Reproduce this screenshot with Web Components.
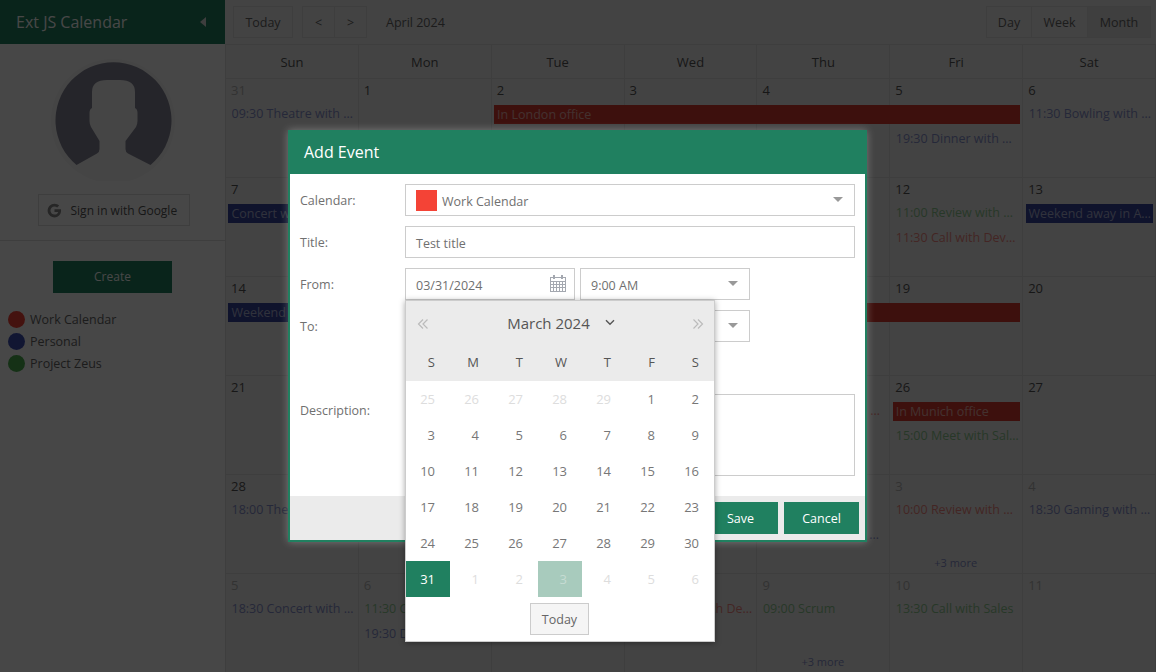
<!DOCTYPE html>
<html>
<head>
<meta charset="utf-8">
<title>Ext JS Calendar</title>
<style>
    html, body { margin: 0; height: 100%; overflow: hidden; }
    body { font: 12.5px "Open Sans", "Liberation Sans", sans-serif; color: #666; background: #fff; }
    cal-app { width: 1156px; height: 672px; }
</style>
</head>
<body>
<cal-app></cal-app>

<script>
const CAL_COLORS = { red: '#f44336', blue: '#3f51b5', green: '#4caf50' };
const BAR_COLORS = { red: '#dc3c30', blue: '#36449e', green: '#4caf50' };

// one week per row: number, outside-month flag, then events by column
const WEEKS = [
    { days: [[31, 1], [1], [2], [3], [4], [5], [6]], events: [
        { col: 0, lane: 0, color: 'blue', text: '09:30 Theatre with friends' },
        { col: 2, span: 4, lane: 0, color: 'red', text: 'In London office', bar: 1 },
        { col: 5, lane: 1, color: 'blue', text: '19:30 Dinner with Wendy' },
        { col: 6, lane: 0, color: 'blue', text: '11:30 Bowling with friends' }
    ] },
    { days: [[7], [8], [9], [10], [11], [12], [13]], events: [
        { col: 0, span: 2, lane: 0, color: 'blue', text: 'Concert with friends', bar: 1 },
        { col: 5, lane: 0, color: 'green', text: '11:00 Review with Sales' },
        { col: 5, lane: 1, color: 'red', text: '11:30 Call with Development' },
        { col: 6, lane: 0, color: 'blue', text: 'Weekend away in Amsterdam', bar: 1 }
    ] },
    { days: [[14], [15], [16], [17], [18], [19], [20]], events: [
        { col: 0, span: 2, lane: 0, color: 'blue', text: 'Weekend away', bar: 1 },
        { col: 3, span: 3, lane: 0, color: 'red', text: 'In Paris office', bar: 1 }
    ] },
    { days: [[21], [22], [23], [24], [25], [26], [27]], events: [
        { col: 4, lane: 0, color: 'red', text: '10:00 Review with Marketing' },
        { col: 5, lane: 0, color: 'red', text: 'In Munich office', bar: 1 },
        { col: 5, lane: 1, color: 'green', text: '15:00 Meet with Sales team' }
    ] },
    { days: [[28], [29], [30], [1, 1], [2, 1], [3, 1], [4, 1]], more: [5], events: [
        { col: 0, lane: 0, color: 'blue', text: '18:00 Theatre with friends' },
        { col: 4, lane: 1, color: 'blue', text: '19:30 Dinner with Wendy' },
        { col: 5, lane: 0, color: 'red', text: '10:00 Review with Marketing' },
        { col: 6, lane: 0, color: 'blue', text: '18:30 Gaming with friends' }
    ] },
    { days: [[5, 1], [6, 1], [7, 1], [8, 1], [9, 1], [10, 1], [11, 1]], more: [4], events: [
        { col: 0, lane: 0, color: 'blue', text: '18:30 Concert with friends' },
        { col: 1, lane: 0, color: 'green', text: '11:30 Call with Sales' },
        { col: 1, lane: 1, color: 'blue', text: '19:30 Dinner with Wendy' },
        { col: 3, lane: 0, color: 'red', text: '14:00 Meet with Development' },
        { col: 4, lane: 0, color: 'green', text: '09:00 Scrum' },
        { col: 5, lane: 0, color: 'green', text: '13:30 Call with Sales' }
    ] }
];

class CalButton extends HTMLElement {
    constructor() {
        super();
        this.attachShadow({ mode: 'open' }).innerHTML = `
            <style>
                :host {
                    display: flex; align-items: center; justify-content: center;
                    box-sizing: border-box; height: 32px; padding: 0 12px;
                    border: 1px solid #ccc; background: #f5f5f5; color: #666;
                    font-size: 12.5px; cursor: pointer;
                }
                :host([primary]) { background: #208060; border-color: #208060; color: #fff; }
            </style>
            <slot></slot>`;
    }
}

class AppSidebar extends HTMLElement {
    constructor() {
        super();
        this.attachShadow({ mode: 'open' }).innerHTML = `
            <style>
                :host { display: flex; flex-direction: column; width: 225px; flex: none; background: #fff; }
                header {
                    display: flex; align-items: center; justify-content: space-between;
                    height: 44px; padding: 0 19px 0 16px; box-sizing: border-box;
                    background: #208060; color: #fff; font-size: 16px;
                }
                .tri { width: 0; height: 0; border: 5px solid transparent; border-right: 6px solid #ddd; border-left: 0; }
                .profile { display: flex; flex-direction: column; align-items: center; height: 196px; border-bottom: 1px solid #ddd; }
                .avatar { display: block; margin-top: 15px; }
                .google {
                    display: flex; align-items: center; gap: 9px; box-sizing: border-box;
                    width: 152px; height: 32px; margin: 13px 0 0 2px; padding-left: 8px;
                    border: 1px solid #ddd; font-size: 12px; color: #555;
                }
                .create { align-self: center; width: 119px; height: 32px; margin: 20px 0 15px; padding-bottom: 2px; font-size: 12px; }
                .legend { display: flex; flex-direction: column; padding-left: 8px; }
                .legend div { display: flex; align-items: center; gap: 5px; height: 22px; color: #666; }
                .legend i { width: 17px; height: 17px; border-radius: 50%; }
            </style>
            <header><span>Ext JS Calendar</span><span class="tri"></span></header>
            <div class="profile">
                <svg class="avatar" width="124" height="122" viewBox="0 0 124 122">
                    <circle cx="62" cy="62" r="62" fill="#f6f6f6"/>
                    <path fill="#858596" d="M25.500 106 A58 58 0 1 1 99.500 106 L77 94.500 Q74.500 93 74.500 90 L74.500 82 L85 68 Q86.500 65 86.500 62 L86.500 54 Q86.500 50 84 49 L84 33 Q84 21 69 21 L56 21 Q41 21 41 33 L41 49 Q38.500 50 38.500 54 L38.500 62 Q38.500 65 40 68 L48.500 82 L48.500 90 Q48.500 93 46 94.500 Z"/>
                </svg>
                <div class="google">
                    <svg width="15" height="15" viewBox="0 0 48 48"><path fill="#888" d="M24 20v8.500h11.800C34.500 33.700 30 37 24 37c-7.200 0-13-5.800-13-13s5.800-13 13-13c3.300 0 6.200 1.200 8.500 3.200l6.300-6.300C34.900 4.400 29.800 2 24 2 11.800 2 2 11.800 2 24s9.800 22 22 22c11 0 21-8 21-22 0-1.300-.1-2.700-.4-4z"/></svg>
                    <span>Sign in with Google</span>
                </div>
            </div>
            <cal-button class="create" primary>Create</cal-button>
            <div class="legend">
                <div><i style="background:${CAL_COLORS.red}"></i>Work Calendar</div>
                <div><i style="background:${CAL_COLORS.blue}"></i>Personal</div>
                <div><i style="background:${CAL_COLORS.green}"></i>Project Zeus</div>
            </div>`;
    }
}

class CalToolbar extends HTMLElement {
    constructor() {
        super();
        this.attachShadow({ mode: 'open' }).innerHTML = `
            <style>
                :host { display: flex; align-items: center; height: 44px; padding: 0 5px 0 8px; box-sizing: border-box; }
                cal-button { background: transparent; border-color: #ddd; }
                .today { width: 60px; margin-right: 9px; }
                .group { display: flex; }
                .group cal-button + cal-button { margin-left: -1px; }
                .nav { width: 33px; padding: 0; }
                .range { margin-left: 19px; flex: 1; color: #666; }
                .day { width: 46px; padding: 0; }
                .week { width: 57px; padding: 0; }
                .month { width: 64px; padding: 0; background: #e0e0e0; }
            </style>
            <cal-button class="today">Today</cal-button>
            <div class="group">
                <cal-button class="nav">&lt;</cal-button>
                <cal-button class="nav">&gt;</cal-button>
            </div>
            <span class="range">April 2024</span>
            <div class="group">
                <cal-button class="day">Day</cal-button>
                <cal-button class="week">Week</cal-button>
                <cal-button class="month">Month</cal-button>
            </div>`;
    }
}

class CalWeek extends HTMLElement {
    constructor() {
        super();
        this.attachShadow({ mode: 'open' });
    }

    set week(w) {
        let html = `
            <style>
                :host {
                    display: grid; height: 99px; box-sizing: border-box;
                    grid-template-columns: repeat(7, minmax(0, 1fr));
                    grid-template-rows: 26px 25px 25px 22px;
                    border-top: 1px solid #ddd; border-right: 1px solid #ddd;
                }
                .day {
                    grid-row: 1 / -1; border-left: 1px solid #ddd;
                    padding: 1px 0 0 5px; line-height: 20px; font-size: 13px; color: #555;
                }
                .day.out { color: #b5b5b5; }
                .ev {
                    grid-row-start: var(--lane); grid-column: var(--col) / span var(--span);
                    min-width: 0; white-space: nowrap; overflow: hidden; text-overflow: ellipsis;
                    line-height: 17px; height: 18px; margin: 0 3px 0 6.5px; color: var(--c); opacity: .6;
                }
                .ev.bar {
                    margin: 0 2.500px 0 3.400px; height: 19px; line-height: 20px; padding: 0 0 0 3px;
                    background: var(--b); color: rgba(255,255,255,.6); opacity: 1;
                }
                .more { grid-row: 4; grid-column: var(--col); text-align: center; font-size: 11px; line-height: 16px; padding-top: 4px; color: ${CAL_COLORS.blue}; opacity: .6; }
            </style>`;
        w.days.forEach((d, i) => {
            html += `<div class="day${d[1] ? ' out' : ''}" style="grid-column:${i + 1}">${d[0]}</div>`;
        });
        w.events.forEach(e => {
            html += `<div class="ev${e.bar ? ' bar' : ''}" style="--lane:${e.lane + 2};--col:${e.col + 1};--span:${e.span || 1};--c:${CAL_COLORS[e.color]};--b:${BAR_COLORS[e.color]}">${e.text}</div>`;
        });
        (w.more || []).forEach(c => {
            html += `<div class="more" style="--col:${c + 1}">+3 more</div>`;
        });
        this.shadowRoot.innerHTML = html;
    }
}

class CalMonth extends HTMLElement {
    constructor() {
        super();
        const names = ['Sun', 'Mon', 'Tue', 'Wed', 'Thu', 'Fri', 'Sat'];
        this.attachShadow({ mode: 'open' }).innerHTML = `
            <style>
                :host { display: flex; flex-direction: column; flex: 1; min-width: 0; background: #f0f0f0; }
                .names {
                    display: grid; grid-template-columns: repeat(7, minmax(0, 1fr)); height: 34px;
                    box-sizing: border-box; border-top: 1px solid #ddd; border-right: 1px solid #ddd;
                }
                .names div { display: flex; align-items: center; justify-content: center; border-left: 1px solid #ddd; font-size: 13px; color: #555; }
            </style>
            <cal-toolbar></cal-toolbar>
            <div class="names">${names.map(n => `<div>${n}</div>`).join('')}</div>
            <div class="weeks"></div>`;
        const weeks = this.shadowRoot.querySelector('.weeks');
        WEEKS.forEach(w => {
            const el = document.createElement('cal-week');
            el.week = w;
            weeks.appendChild(el);
        });
    }
}

class DatePicker extends HTMLElement {
    constructor() {
        super();
        const letters = ['S', 'M', 'T', 'W', 'T', 'F', 'S'];
        const days = [];
        for (let d = 25; d <= 29; d++) days.push([d, 'out']);
        for (let d = 1; d <= 30; d++) days.push([d, '']);
        days.push([31, 'sel']);
        for (let d = 1; d <= 6; d++) days.push([d, d === 3 ? 'out soft' : 'out']);
        this.attachShadow({ mode: 'open' }).innerHTML = `
            <style>
                :host {
                    display: block; position: absolute; left: 115px; top: 170px; width: 310px;
                    box-sizing: border-box; border: 1px solid #ccc; background: #fff;
                    box-shadow: 0 1px 6px rgba(0,0,0,.35); color: #777; font-size: 13px;
                }
                .head { background: #ebebeb; }
                .title { display: flex; align-items: center; justify-content: space-between; height: 45px; padding: 0 10px 0 11px; }
                .title svg { display: block; }
                .month { display: flex; align-items: center; gap: 15px; font-size: 15px; line-height: 20px; padding-bottom: 2px; color: #555; margin-left: 1px; }
                .grid { display: grid; grid-template-columns: repeat(7, 44px); }
                .grid span { display: flex; align-items: center; justify-content: flex-end; padding-right: 15px; height: 36px; }
                .dow span { height: 31px; padding-bottom: 4px; color: #555; }
                .grid .out { color: #ddd; }
                .grid .sel { background: #208060; color: #fff; }
                .grid .soft { background: #a8cbbd; color: #c6dcd3; }
                .foot { display: flex; justify-content: center; padding: 6px 2px 6px 0; }
                cal-button { width: 59px; padding: 0 0 0 1px; }
            </style>
            <div class="head">
                <div class="title">
                    <svg width="12" height="12" viewBox="0 0 12 12" fill="none" stroke="#bbb" stroke-width="1.200"><path d="M6 1.500L1.500 6L6 10.500M10.500 1.500L6 6l4.500 4.500"/></svg>
                    <div class="month">March 2024
                        <svg width="10" height="7" viewBox="0 0 10 7" fill="none" stroke="#555" stroke-width="1.400"><path d="M1 1.200l4 4 4-4"/></svg>
                    </div>
                    <svg width="12" height="12" viewBox="0 0 12 12" fill="none" stroke="#bbb" stroke-width="1.200"><path d="M6 1.500L10.500 6L6 10.500M1.500 1.500L6 6l-4.500 4.500"/></svg>
                </div>
                <div class="grid dow">${letters.map(l => `<span>${l}</span>`).join('')}</div>
            </div>
            <div class="grid">${days.map(d => `<span class="${d[1]}">${d[0]}</span>`).join('')}</div>
            <div class="foot"><cal-button>Today</cal-button></div>`;
    }
}

class FormField extends HTMLElement {
    static get observedAttributes() { return ['label']; }

    constructor() {
        super();
        this.attachShadow({ mode: 'open' }).innerHTML = `
            <style>
                :host { display: flex; align-items: flex-start; }
                label { width: 105px; flex: none; line-height: 34px; height: 32px; color: #707070; }
                .ctl { display: flex; flex: 1; gap: 5px; min-width: 0; }
            </style>
            <label></label><div class="ctl"><slot></slot></div>`;
    }

    attributeChangedCallback(name, oldValue, newValue) {
        this.shadowRoot.querySelector('label').textContent = newValue;
    }
}

class FormInput extends HTMLElement {
    constructor() {
        super();
        const icon = this.getAttribute('icon');
        let after = '';
        if (icon === 'arrow') {
            after = '<i class="arrow"></i>';
        } else if (icon === 'cal') {
            after = `<svg width="16" height="17" viewBox="0 0 16 17" fill="none" stroke="#a4a8b0"><rect x=".5" y="2.500" width="15" height="14"/><path d="M.5 6.500h15M.5 9.500h15M.5 12.500h15M3.500 6.500v10M6.500 6.500v10M9.500 6.500v10M12.500 6.500v10"/><path stroke-width="2" d="M4 0v4M12 0v4"/></svg>`;
        }
        this.attachShadow({ mode: 'open' }).innerHTML = `
            <style>
                :host {
                    display: flex; align-items: center; box-sizing: border-box;
                    height: 32px; padding: 0 10px; border: 1px solid #ccc;
                    background: #fff; color: #707070; flex: 1; min-width: 0;
                }
                :host([half]) { flex: none; width: 170px; }
                :host([tall]) { height: 82px; }
                .text { flex: 1; white-space: nowrap; padding-top: 2px; }
                .arrow { width: 0; height: 0; border: 5px solid transparent; border-top: 5px solid #999; border-bottom: 0; margin: -2px 1px 0 0; }
                svg { margin: -2px -2px 0 0; }
            </style>
            <div class="text"><slot></slot></div>${after}`;
    }
}

class AddEventDialog extends HTMLElement {
    constructor() {
        super();
        this.attachShadow({ mode: 'open' }).innerHTML = `
            <style>
                :host {
                    display: flex; flex-direction: column; position: absolute; left: 288px; top: 130px;
                    width: 579px; height: 412px; box-sizing: border-box;
                    border: 2px solid #208060; border-top: 0; background: #fff;
                    box-shadow: 0 0 8px rgba(255,255,255,.3);
                }
                h1 {
                    margin: 0 -2px; height: 44px; line-height: 44px; padding-left: 16px;
                    font-size: 16px; font-weight: 400; background: #208060; color: #fff;
                }
                form { display: flex; flex-direction: column; gap: 10px; flex: 1; padding: 10px 10px 0 10px; }
                .work { display: flex; align-items: center; gap: 5px; margin-top: -2px; }
                .work i { width: 21px; height: 21px; background: ${CAL_COLORS.red}; }
                .work span { padding-top: 2px; }
                .desc { margin-top: 42px; }
                footer {
                    display: flex; justify-content: flex-end; gap: 6px; align-items: center;
                    height: 44px; padding: 0 6px 0 0; background: #ebebeb;
                }
                footer cal-button { width: 75px; padding: 0; }
            </style>
            <h1>Add Event</h1>
            <form>
                <form-field label="Calendar:"><form-input icon="arrow"><div class="work"><i></i><span>Work Calendar</span></div></form-input></form-field>
                <form-field label="Title:"><form-input>Test title</form-input></form-field>
                <form-field label="From:"><form-input half icon="cal">03/31/2024</form-input><form-input half icon="arrow">9:00 AM</form-input></form-field>
                <form-field label="To:"><form-input half icon="cal">03/31/2024</form-input><form-input half icon="arrow">10:00 AM</form-input></form-field>
                <form-field class="desc" label="Description:"><form-input tall></form-input></form-field>
            </form>
            <footer><cal-button primary>Save</cal-button><cal-button primary>Cancel</cal-button></footer>
            <date-picker></date-picker>`;
    }
}

class CalApp extends HTMLElement {
    constructor() {
        super();
        this.attachShadow({ mode: 'open' }).innerHTML = `
            <style>
                :host { display: flex; position: relative; overflow: hidden; }
                .mask { position: absolute; inset: 0; background: rgba(0,0,0,.72); }
            </style>
            <app-sidebar></app-sidebar>
            <cal-month></cal-month>
            <div class="mask"></div>
            <add-event-dialog></add-event-dialog>`;
    }
}

window.customElements.define('cal-button', CalButton);
window.customElements.define('app-sidebar', AppSidebar);
window.customElements.define('cal-toolbar', CalToolbar);
window.customElements.define('cal-week', CalWeek);
window.customElements.define('cal-month', CalMonth);
window.customElements.define('date-picker', DatePicker);
window.customElements.define('form-field', FormField);
window.customElements.define('form-input', FormInput);
window.customElements.define('add-event-dialog', AddEventDialog);
window.customElements.define('cal-app', CalApp);
</script>
</body>
</html>
